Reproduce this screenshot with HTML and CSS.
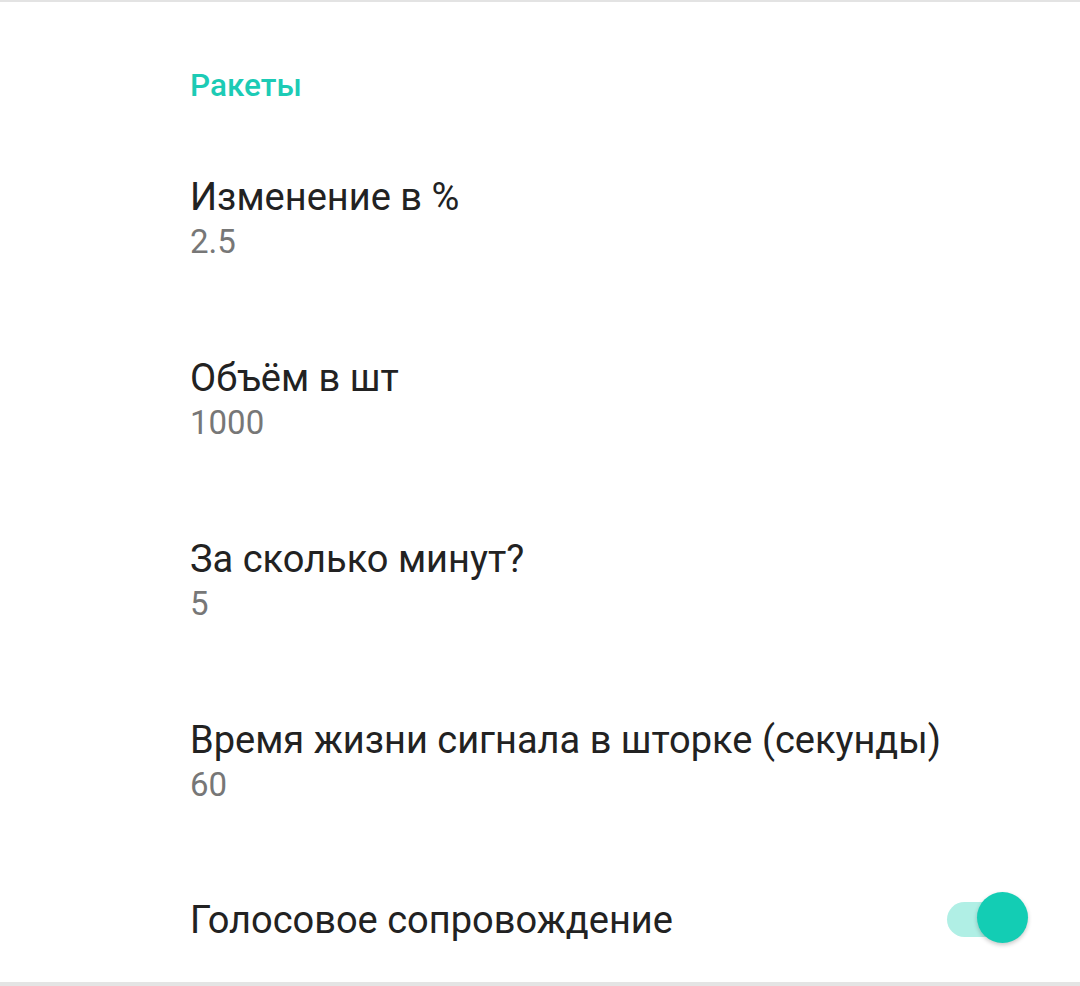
FILE: index.html
```html
<!DOCTYPE html>
<html lang="ru">
<head>
<meta charset="utf-8">
<title>Ракеты</title>
<link rel="stylesheet" href="styles.css">
</head>
<body>
<div class="screen">
  <div class="category">Ракеты</div>
  <div class="pref">
    <div class="pref-title">Изменение в %</div>
    <div class="pref-summary">2.5</div>
  </div>
  <div class="pref">
    <div class="pref-title">Объём в шт</div>
    <div class="pref-summary">1000</div>
  </div>
  <div class="pref">
    <div class="pref-title">За сколько минут?</div>
    <div class="pref-summary">5</div>
  </div>
  <div class="pref">
    <div class="pref-title">Время жизни сигнала в шторке (секунды)</div>
    <div class="pref-summary">60</div>
  </div>
  <div class="pref pref-switch">
    <div class="pref-title">Голосовое сопровождение</div>
    <div class="switch">
      <div class="switch-track"></div>
      <div class="switch-thumb"></div>
    </div>
  </div>
</div>
</body>
</html>
```
FILE: styles.css
```css
html, body {
  margin: 0;
  padding: 0;
  background: #ffffff;
}
body {
  font-family: Roboto, "Noto Sans", "Liberation Sans", sans-serif;
}
.screen {
  box-sizing: border-box;
  height: 986px;
  border-top: 2px solid #e3e3e3;
  border-bottom: 4px solid #e4e4e4;
  padding: 64px 0 0 190px;
  display: flex;
  flex-direction: column;
}
.category {
  font-size: 31.5px;
  line-height: 40px;
  font-weight: 500;
  color: #1ccbb5;
  margin-bottom: 23px;
}
.pref {
  padding: 45px 0 46px 0;
}
.pref-title {
  font-size: 38px;
  line-height: 46px;
  color: #222222;
}
.pref-summary {
  font-size: 33px;
  line-height: 44px;
  color: #777777;
}
.pref-switch {
  padding-top: 41px;
  padding-right: 52px;
  padding-bottom: 0;
  display: flex;
  align-items: center;
  justify-content: space-between;
}
.switch {
  position: relative;
  width: 81px;
  height: 51px;
  display: flex;
  align-items: center;
}
.switch-track {
  width: 66px;
  height: 35px;
  border-radius: 18px;
  background: #b0efe5;
}
.switch-thumb {
  position: absolute;
  right: 0;
  top: -2px;
  width: 51px;
  height: 51px;
  border-radius: 50%;
  background: #13cdb4;
  box-shadow: 0 2px 4px rgba(0, 0, 0, 0.22);
}
```
